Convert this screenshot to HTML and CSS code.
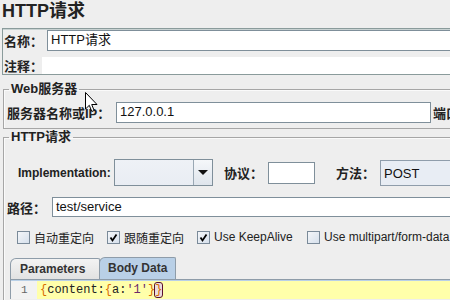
FILE: index.html
```html
<!DOCTYPE html>
<html>
<head>
<meta charset="utf-8">
<link rel="stylesheet" href="styles.css">
</head>
<body>
<div class="title">HTTP请求</div>
<div class="namebox">
  <div class="row r-name"><span class="lbl">名称：</span><div class="field f-name">HTTP请求</div></div>
  <div class="row r-comment"><span class="lbl">注释：</span><div class="f-comment"></div></div>
</div>
<fieldset class="group g-web">
  <legend>Web服务器</legend>
  <div class="row r-server"><span class="lbl l-server">服务器名称或IP：</span><div class="field f-server">127.0.0.1</div><span class="lbl l-port">端口</span></div>
</fieldset>
<fieldset class="group g-http">
  <legend>HTTP请求</legend>
  <div class="row r-impl">
    <span class="lbl l-impl">Implementation:</span>
    <div class="combo c-impl"><div class="combo-val"></div><div class="combo-btn"><span class="arrow"></span></div></div>
    <span class="lbl l-proto">协议：</span>
    <div class="field f-proto"></div>
    <span class="lbl l-method">方法：</span>
    <div class="combo c-method"><div class="combo-val">POST</div></div>
  </div>
  <div class="row r-path"><span class="lbl l-path">路径：</span><div class="field f-path">test/service</div></div>
  <div class="row r-checks">
    <label class="chk w1"><span class="box"></span>自动重定向</label>
    <label class="chk w2"><span class="box on"><svg viewBox="0 0 13 13" width="13" height="13"><path d="M3.5 6.5 L5.5 9.5 L9.5 3.5" fill="none" stroke="#000" stroke-width="1.8"/></svg></span>跟随重定向</label>
    <label class="chk w3"><span class="box on"><svg viewBox="0 0 13 13" width="13" height="13"><path d="M3.5 6.5 L5.5 9.5 L9.5 3.5" fill="none" stroke="#000" stroke-width="1.8"/></svg></span>Use KeepAlive</label>
    <label class="chk"><span class="box"></span>Use multipart/form-data</label>
  </div>
  <div class="tabs">
    <div class="tab">Parameters</div>
    <div class="tab sel">Body Data</div>
  </div>
  <div class="tabbody">
    <div class="editor">
      <div class="gutter">1</div>
      <div class="code"><span class="br">{</span>content:<span class="br">{</span>a:<span class="str">'1'</span><span class="br">}</span><span class="match">}</span></div>
    </div>
  </div>
</fieldset>
<svg class="cursor" width="13" height="21" viewBox="0 0 13 21"><path d="M0.5 0.5 L0.5 17 L4.3 13.3 L6.8 19.5 L9.2 18.5 L6.7 12.5 L12 12.5 Z" fill="#fff" stroke="#000" stroke-width="1" stroke-linejoin="round"/></svg>
</body>
</html>
```
FILE: styles.css
```css
html, body { margin: 0; padding: 0; }
body {
  width: 450px;
  height: 300px;
  overflow: hidden;
  background: #eeeeee;
  font-family: "Liberation Sans", "Noto Sans CJK SC", sans-serif;
  font-size: 13px;
  color: #111;
  position: relative;
}
.title {
  height: 28px;
  padding-left: 2px;
  font-size: 18px;
  font-weight: bold;
  line-height: 22px;
  color: #222;
}
.row { display: flex; align-items: center; white-space: nowrap; }
.lbl { font-weight: bold; color: #222; flex: none; }
.field {
  background: #fff;
  border: 1px solid #7f8f9a;
  box-sizing: border-box;
  padding-left: 3px;
  line-height: 18px;
  flex: none;
  overflow: hidden;
}
.namebox {
  margin-left: 2px;
  border: 1px solid #8a9b9b;
  border-right: none;
  box-shadow: inset 0 1px #c8d2d2;
  height: 45px;
}
.r-name { margin-top: 1px; padding-left: 1px; height: 21px; }
.r-name .lbl { width: 43px; }
.f-name { width: 410px; height: 21px; }
.r-comment { margin-top: 6px; padding-left: 1px; height: 17px; }
.r-comment .lbl { width: 38px; }
.f-comment { background: #fff; width: 410px; height: 17px; }

.group {
  margin: 0 -60px 0 3px;
  padding: 0;
  border: 1px solid #a6a6a6;
  box-shadow: inset 1px 1px #fafafa;
  min-width: 0;
}
.group legend {
  margin-left: 5px;
  padding: 0 2px;
  font-weight: bold;
  font-size: 13px;
  line-height: 16px;
  color: #222;
}
.g-web { margin-top: 6px; padding-bottom: 5px; }
.r-server { margin-top: 5px; padding-left: 3px; height: 21px; }
.l-server { width: 109px; }
.f-server { width: 315px; height: 21px; }
.l-port { margin-left: 2px; }

.g-http { margin-top: 0; height: 200px; }
.r-impl { margin-top: 14px; padding-left: 14px; height: 27px; }
.l-impl { width: 96px; font-size: 12px; }
.combo {
  display: flex;
  height: 27px;
  box-sizing: border-box;
  border: 1px solid #7f8f9a;
  background: linear-gradient(#eef1f6, #e9edf3);
  flex: none;
}
.c-impl { width: 99px; }
.combo-val { flex: 1; padding-left: 3px; line-height: 25px; }
.combo-btn {
  width: 18px;
  border-left: 1px solid #9aa8b4;
  background: linear-gradient(#f5f7fa, #dfe5ec);
  display: flex;
  align-items: center;
  justify-content: center;
}
.arrow {
  width: 0; height: 0;
  border-left: 5px solid transparent;
  border-right: 5px solid transparent;
  border-top: 5px solid #111;
}
.l-proto { margin-left: 11px; width: 44px; }
.f-proto { width: 47px; height: 22px; }
.l-method { margin-left: 21px; width: 44px; }
.c-method { width: 100px; height: 26px; background: #e8edf4; border-color: #8f9dab; }

.r-path { margin-top: 11px; padding-left: 3px; height: 20px; }
.l-path { width: 45px; }
.f-path { width: 410px; height: 20px; }

.r-checks { margin-top: 13px; padding-left: 13px; height: 14px; font-size: 12px; }
.chk { display: flex; align-items: center; flex: none; color: #222; }
.w1 { width: 90px; }
.w2 { width: 90px; }
.w3 { width: 110px; }
.box {
  width: 13px; height: 13px;
  box-sizing: border-box;
  border: 1px solid #7a8a99;
  background: linear-gradient(135deg, #f4f6f9, #d6e0ec);
  margin-right: 4px;
  flex: none;
  position: relative;
}
.box svg { position: absolute; left: -1px; top: -1px; }

.tabs { display: flex; margin-top: 13px; padding-left: 6px; height: 22px; align-items: flex-end; }
.tab {
  box-sizing: border-box;
  height: 21px;
  padding: 0 9px;
  border: 1px solid #8e9ca9;
  border-bottom: none;
  border-radius: 6px 2px 0 0;
  background: linear-gradient(#f3f3f3, #e2e2e2);
  font-weight: bold;
  font-size: 12px;
  line-height: 20px;
  color: #333;
  width: 90px;
  white-space: nowrap;
}
.tab.sel {
  height: 22px;
  width: 77px;
  padding: 0 8px;
  background: #b9d0e7;
  margin-left: -1px;
}
.tabbody {
  margin-left: 6px;
  border-top: 1px solid #8e9ca9;
  border-left: 1px solid #8e9ca9;
  background: #b9d0e7;
  padding-top: 1px;
}
.editor { display: flex; height: 18px; background: #fff; }
.gutter {
  width: 26px;
  background: #f2f2f2;
  color: #666;
  font-family: "Liberation Mono", monospace;
  font-size: 11px;
  line-height: 18px;
  padding-left: 10px;
  box-sizing: border-box;
}
.code {
  flex: 1;
  background: #ffffaa;
  padding-left: 3px;
  font-family: "Liberation Mono", monospace;
  font-size: 12px;
  line-height: 18px;
  color: #222;
}
.br { color: #d86a00; }
.str { color: #6a2a6a; }
.match {
  color: #d86a00;
  outline: 1px solid #5a1030;
  border-radius: 2px;
  background: #eadce0;
}
.cursor { position: absolute; left: 85px; top: 92px; }
```
